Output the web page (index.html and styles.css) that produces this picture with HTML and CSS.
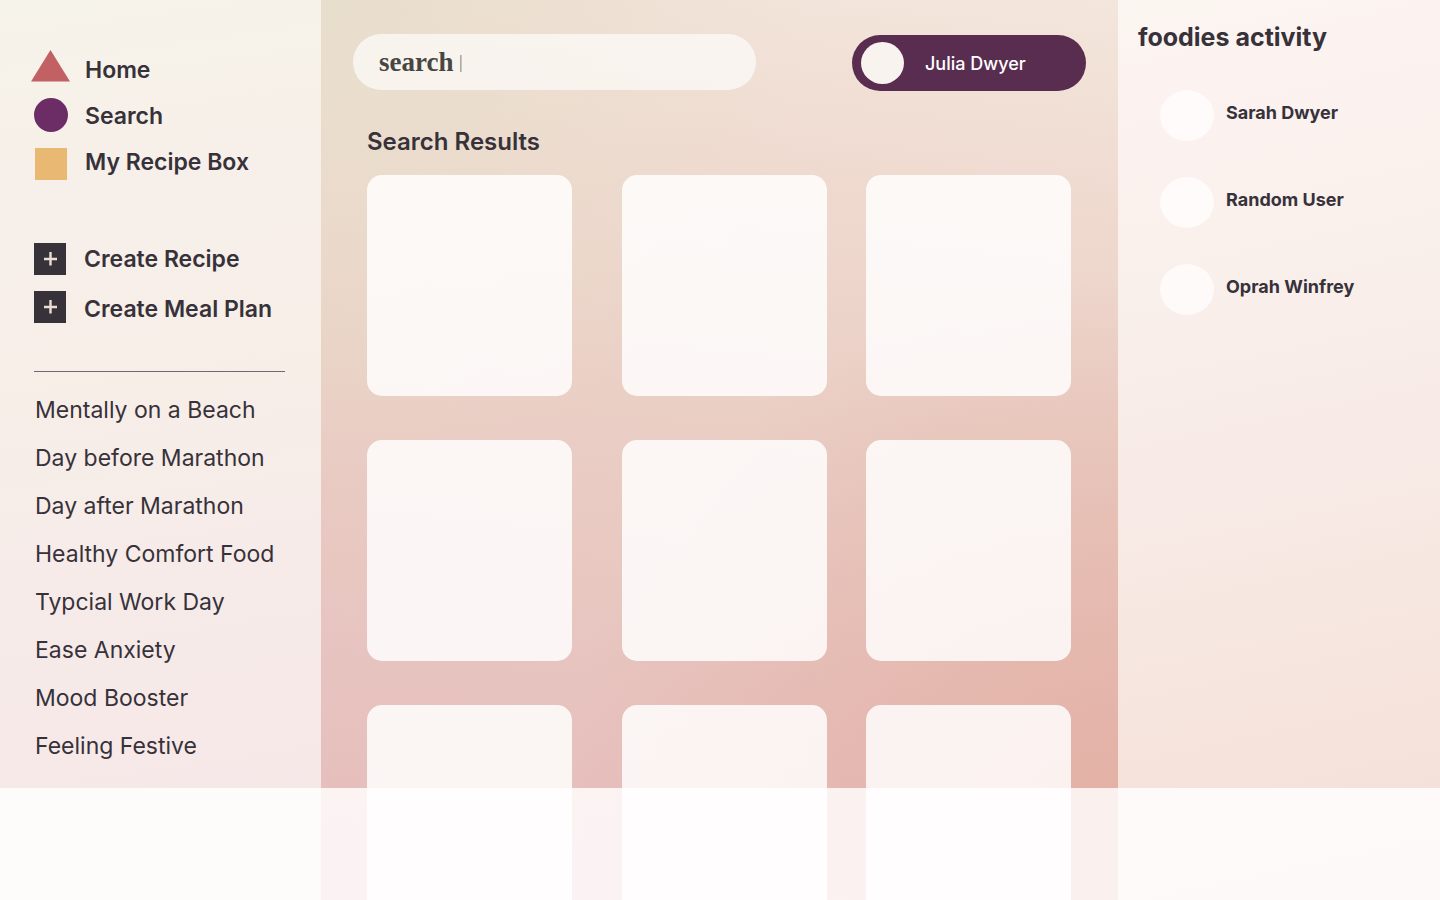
FILE: index.html
```html
<!DOCTYPE html>
<html lang="en">
<head>
<meta charset="utf-8">
<meta name="viewport" content="width=device-width, initial-scale=1">
<title>Search Results</title>
<link rel="stylesheet" href="styles.css">
</head>
<body>
<div class="app">
  <aside class="sidebar">
    <nav class="nav" aria-label="Main">
      <a class="nav-link" href="#home"><svg class="shape" viewBox="0 0 40 46" aria-hidden="true"><path d="M19.5 3 39 34.5H0z" fill="#c26163"/></svg>Home</a>
      <a class="nav-link" href="#search"><svg class="shape" viewBox="0 0 40 46" aria-hidden="true"><circle cx="20" cy="22" r="17" fill="#6c2c65"/></svg>Search</a>
      <a class="nav-link" href="#box"><svg class="shape" viewBox="0 0 40 46" aria-hidden="true"><path d="M4 9h32v32H4z" fill="#e9b872"/></svg>My Recipe Box</a>
    </nav>
    <div class="actions">
      <button class="action" type="button"><svg class="plus" viewBox="0 0 32 50" aria-hidden="true"><path d="M0 9h32v32H0z" fill="#37323a"/><path d="M16.5 18v13.5M10 25h13" stroke="#eadfd5" stroke-width="2.4"/></svg>Create Recipe</button>
      <button class="action" type="button"><svg class="plus" viewBox="0 0 32 50" aria-hidden="true"><path d="M0 7h32v32H0z" fill="#37323a"/><path d="M16.5 16v13.5M10 23h13" stroke="#eadfd5" stroke-width="2.4"/></svg>Create Meal Plan</button>
    </div>
    <hr class="divider">
    <ul class="plans">
      <li><a class="plan" href="#beach">Mentally on a Beach</a></li>
      <li><a class="plan" href="#before">Day before Marathon</a></li>
      <li><a class="plan" href="#after">Day after Marathon</a></li>
      <li><a class="plan" href="#comfort">Healthy Comfort Food</a></li>
      <li><a class="plan" href="#work">Typcial Work Day</a></li>
      <li><a class="plan" href="#anxiety">Ease Anxiety</a></li>
      <li><a class="plan" href="#mood">Mood Booster</a></li>
      <li><a class="plan" href="#festive">Feeling Festive</a></li>
    </ul>
  </aside>
  <main class="main">
    <header class="topbar">
      <label class="search"><input class="search-input" type="text" value="search" aria-label="Search recipes"><span class="caret">|</span></label>
      <button class="profile" type="button"><span class="profile-photo"></span>Julia Dwyer</button>
    </header>
    <h1 class="title">Search Results</h1>
    <section class="results" aria-label="Results">
      <article class="card"></article><article class="card"></article><article class="card"></article>
      <article class="card"></article><article class="card"></article><article class="card"></article>
      <article class="card"></article><article class="card"></article><article class="card"></article>
    </section>
  </main>
  <aside class="activity">
    <h2 class="activity-title">foodies activity</h2>
    <ul class="people">
      <li class="person"><span class="photo"></span><span class="name">Sarah Dwyer</span></li>
      <li class="person"><span class="photo"></span><span class="name">Random User</span></li>
      <li class="person"><span class="photo"></span><span class="name">Oprah Winfrey</span></li>
    </ul>
  </aside>
</div>
<footer class="dock"></footer>
</body>
</html>
```

FILE: styles.css
```css
* { box-sizing: border-box; }
body {
  margin: 0;
  overflow: hidden;
  font-family: Inter, Roboto, sans-serif;
  color: #37323a;
}
ul { list-style: none; margin: 0; padding: 0; }
a { color: inherit; text-decoration: none; }
button { border: 0; background: none; font: inherit; color: inherit; cursor: pointer; }
svg { display: block; flex: none; }

.app {
  display: grid;
  grid-template-columns: 321px minmax(0, 1fr) 322px;
  height: 100vh;
  overflow: hidden;
}

.sidebar {
  padding: 47px 0 0;
  background: linear-gradient(172deg, #f6f3ea 0%, #f7efe9 22%, #f7eee8 42%, #f6eae9 68%, #f6e6e6 100%);
}
.nav { padding-left: 31px; }
.nav-link { display: flex; align-items: center; gap: 14px; height: 46px; font-size: 23px; font-weight: 600; }
.shape { width: 40px; height: 46px; }
.actions { padding: 49px 0 0 34px; }
.action { display: flex; align-items: center; gap: 18px; height: 50px; padding: 0; font-size: 23px; font-weight: 600; white-space: nowrap; }
.plus { width: 32px; height: 50px; }
.divider { height: 1px; margin: 37px 36px 14px 34px; border: 0; background: #716970; }
.plans { padding-left: 35px; }
.plan { display: flex; align-items: center; height: 48px; font-size: 23px; white-space: nowrap; }

.main {
  padding: 34px 32px 0;
  background:
    radial-gradient(circle at 0 0, #e8decc 0, #e8decc00 480px),
    radial-gradient(circle at 100% 90%, #e3b0a4 0, #e3b0a400 560px),
    linear-gradient(186deg, #f3e6dc 0%, #efd9cf 22%, #eacfc5 44%, #e7c3bf 74%, #e5bbbb 100%);
}
.topbar { display: flex; justify-content: space-between; align-items: flex-start; }
.search {
  display: flex;
  align-items: center;
  flex: 0 1 403px;
  height: 56px;
  padding-left: 26px;
  border-radius: 28px;
  background: rgba(255, 255, 255, 0.64);
  font-family: "Liberation Serif", serif;
  font-size: 27px;
  color: #484643;
}
.search-input {
  width: 80px;
  padding: 0;
  border: 0;
  outline: 0;
  background: none;
  font: inherit;
  font-weight: 700;
  color: inherit;
}
.caret { font-size: 18px; color: #77736f; }
.profile {
  display: flex;
  align-items: center;
  gap: 21px;
  flex: 0 1 234px;
  height: 56px;
  margin-top: 1px;
  padding: 0 9px;
  border-radius: 28px;
  background: #592d50;
  color: #fff;
  font-size: 18px;
  font-weight: 500;
  white-space: nowrap;
}
.profile-photo { flex: none; width: 43px; height: 42px; border-radius: 50%; background: #f8f3ef; }
.title { margin: 36px 14px 18px; font-size: 24px; line-height: 30px; font-weight: 600; }
.results {
  display: grid;
  grid-template-columns: 205fr 50fr 205fr 39fr 205fr;
  grid-auto-rows: 221px;
  row-gap: 44px;
  padding: 0 15px 0 14px;
}
.card { border-radius: 15px; background: rgba(255, 255, 255, 0.83); }
.card:nth-child(3n + 1) { grid-column: 1; }
.card:nth-child(3n + 2) { grid-column: 3; }
.card:nth-child(3n) { grid-column: 5; }

.activity {
  padding: 22px 20px 0;
  background: linear-gradient(168deg, #fbf6f1 0%, #fcf2ef 10%, #f9efeb 30%, #f8ebe7 48%, #f6e5de 72%, #f4ddd7 100%);
}
.activity-title { margin: 0; font-size: 25px; line-height: 30px; font-weight: 700; }
.people { display: grid; gap: 36px; padding: 38px 0 0 22px; }
.person { display: flex; gap: 12px; }
.photo { width: 54px; height: 51px; border-radius: 50%; background: rgba(255, 255, 255, 0.7); }
.name { padding-top: 12px; font-size: 18px; line-height: 22px; font-weight: 700; }

.dock { position: fixed; inset: auto 0 0; height: 112px; background: rgba(255, 255, 255, 0.82); }
```
